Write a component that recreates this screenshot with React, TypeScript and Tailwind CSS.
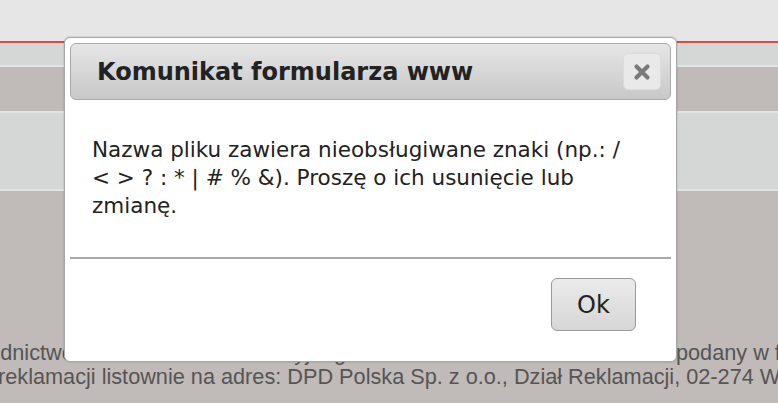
export default function App() {
  return (
    <div className="relative flex h-[403px] w-[778px] flex-col overflow-hidden bg-[#c0bbb8] font-['Liberation_Sans',Arial,sans-serif]">
      <div className="h-[41px] bg-[#e6e6e6]" />
      <div className="h-[2px] bg-[#e6463d]" />
      <div className="h-[22px] bg-[#d5d7d6]" />
      <div className="h-[2px] bg-[#e3e3e3]" />
      <div className="h-[44px] bg-[#c0bbb8]" />
      <div className="h-[2px] bg-[#e3e3e3]" />
      <div className="h-[76px] bg-[#d5d7d6]" />
      <div className="h-[2px] bg-[#e3e3e3]" />
      <div className="flex-1 pt-[150px] text-[21.7px] leading-[24px] text-[#555] whitespace-nowrap">
        <div className="flex">
          <span className="ml-[-54px] w-[730px] shrink-0 overflow-hidden">pośrednictwem formularza reklamacyjnego lub na adres e-mail</span>
          <span>podany w formularzu</span>
        </div>
        <p className="ml-[-2px]">reklamacji listownie na adres: DPD Polska Sp. z o.o., Dział Reklamacji, 02-274 Warszawa</p>
      </div>

      {/* modal */}
      <div className="absolute left-[64px] top-[37px] flex h-[325px] w-[613px] flex-col rounded-[6px] border border-[#a8a8a8] bg-white p-[5px] font-['DejaVu_Sans',Verdana,sans-serif] shadow-[0_0_2px_rgba(0,0,0,0.25)]">
        <div className="flex h-[57px] items-center justify-between rounded-[6px] border border-[#a9a9a9] bg-gradient-to-b from-[#e6e6e6] to-[#c8c8c8] pl-[26px] pr-[9px]">
          <h1 className="text-[24px] font-bold text-[#222]">Komunikat formularza www</h1>
          <button className="flex h-[37px] w-[38px] items-center justify-center rounded-[5px] border border-[#dcdcdc] bg-[#e9e9e9]">
            <svg width="18" height="18" viewBox="0 0 18 18">
              <path d="M3.5 3.5 L14.5 14.5 M14.5 3.5 L3.5 14.5" stroke="#7a7a7a" strokeWidth="4.2" strokeLinecap="round" />
            </svg>
          </button>
        </div>
        <div className="h-[157px] pl-[22px] pr-[10px] pt-[36px] text-[21.5px] leading-[28px] text-[#222]">
          <p>
            Nazwa pliku zawiera nieobsługiwane znaki (np.: /<br />
            &lt; &gt; ? : * | # % &amp;). Proszę o ich usunięcie lub<br />
            zmianę.
          </p>
        </div>
        <div className="h-[2px] bg-[#a9a9a9]" />
        <div className="flex justify-end pr-[35px] pt-[19px]">
          <button className="flex h-[53px] w-[85px] items-center justify-center rounded-[6px] border border-[#9a9a9a] bg-gradient-to-b from-[#ebebeb] to-[#d6d6d6] text-[24px] text-[#222]">
            Ok
          </button>
        </div>
      </div>
    </div>
  );
}
